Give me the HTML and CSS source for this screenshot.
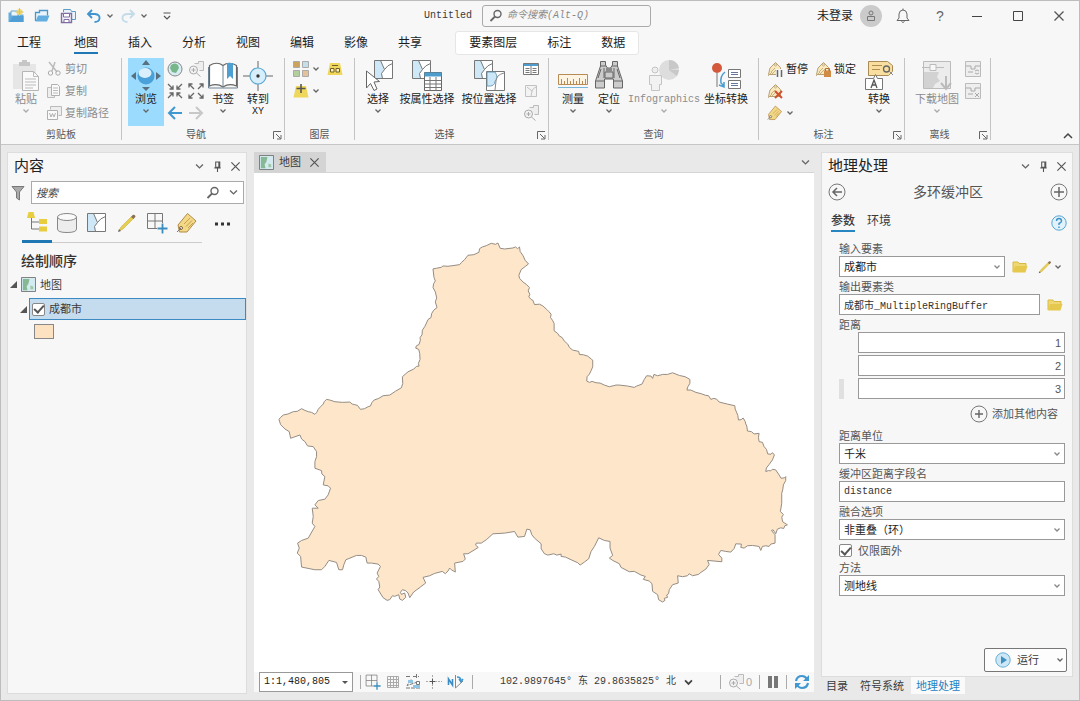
FILE: index.html
```html
<!DOCTYPE html>
<html lang="zh-CN">
<head>
<meta charset="utf-8">
<title>Untitled</title>
<link rel="stylesheet" href="styles.css">
</head>
<body>
<svg class="defs" aria-hidden="true">
  <symbol id="chev" viewBox="0 0 8 8"><path d="M1.500 2.500 4 5l2.500-2.500" fill="none" stroke="currentColor"/></symbol>
  <symbol id="launch" viewBox="0 0 9 9"><path d="M.5 8V.5H8M3 3l4.500 4.500M8 4v4H4" fill="none" stroke="#666"/></symbol>
  <symbol id="close" viewBox="0 0 12 12"><path d="M1.500 1.500l9 9m0-9l-9 9" fill="none" stroke="#555" stroke-width="1.300"/></symbol>
  <symbol id="pin" viewBox="0 0 10 12"><path d="M3 1h4.500v6H3zM1.500 7.500h7M5 7.500V12M6.500 1v6" fill="none" stroke="#555" stroke-width="1.200"/></symbol>
  <symbol id="mag" viewBox="0 0 14 14"><circle cx="8.500" cy="5" r="3.500" fill="none" stroke="#666" stroke-width="1.400"/><path d="M6 7.500 1.500 12" stroke="#666" stroke-width="1.800"/></symbol>
  <symbol id="folder" viewBox="0 0 16 14"><path d="M1 12V2h5l1 1.500h7V6" fill="#efd873" stroke="#d8ba42"/><path d="M1 12.500 3 6h12.500l-2 6.500z" fill="#e6c84c"/></symbol>
  <symbol id="pencil" viewBox="0 0 20 20"><path d="M2 18l2-4L14.500 3.500l2 2L6 16z" fill="#e6cf50" stroke="#c9ac3c" stroke-width=".6"/><path d="M14 4l2-2.200q2.500-.3 2.500 2L16.500 6z" fill="#8b6f55"/><path d="M1 19l1-3 2 2z" fill="#666"/></symbol>
  <symbol id="poly" viewBox="0 0 20 20"><path d="M.5.500h18v18H.5z" fill="#fff"/><path d="M.5.500h6l4 9-3 4 1 5h-8z" fill="#cfe8f7"/><path d="M.5.500h18v18H.5zM6.500.5l4 9-3 4 1 5M10.500 9.500q3-4.500 8-6" fill="none" stroke="#777"/></symbol>
  <symbol id="house" viewBox="0 0 16 16"><path d="M1.500 13.500 3 7 8.500 1.500l5 5v7z" fill="#fae9bd" stroke="#b9a172"/><path d="M4 11l4-4m-3 6 5-5M1 15l4-4" stroke="#b9a172" stroke-width=".8"/><circle cx="8.500" cy="4" r="1" fill="#fff" stroke="#8d7440" stroke-width=".5"/></symbol>
  <symbol id="tag" viewBox="0 0 22 22"><path d="M2 13 11.500 1.500 20 9 11 20H3.500z" fill="#f3d888" stroke="#b18b45"/><path d="M8 12l6-6M10 14.500l6-6M12 16l5-5" stroke="#c79f4d"/><circle cx="5" cy="16" r="1.500" fill="#fff" stroke="#7d633a"/><path d="M5 16l-4 4" stroke="#777"/></symbol>
  <symbol id="gridplus" viewBox="0 0 22 22"><path d="M1.500 1.500h15v15h-15zM9 1.500v15M1.500 9h15" fill="none" stroke="#777"/><path d="M11 11h11v11H11z" fill="#f7f7f7"/><path d="M16.500 11.500v10M11.500 16.500h10" stroke="#3c8dbf" stroke-width="1.800"/></symbol>
  <symbol id="mapicon" viewBox="0 0 16 16"><path d="M.5.500h15v15H.5z" fill="#d2eaf0" stroke="#777"/><path d="M2 2h7l-1 5-2 3 1 4H2z" fill="#86b894"/><path d="M10 9l3 1v3h-3z" fill="#9cc8a4"/></symbol>
  <symbol id="zoomsel" viewBox="0 0 16 16"><path d="M6.500 2.500h4v-2h5v9h-4" fill="#eee" stroke="#bbb"/><circle cx="5.500" cy="9" r="4" fill="#f3f3f3" stroke="#aaa"/><path d="M3.500 9h4m-2-2v4M8.500 12l4 3.500" stroke="#aaa"/></symbol>
</svg>

<div class="window">
<header class="titlebar">
  <div class="quick">
    <button class="ib" aria-label="新建"><svg width="16" height="16" viewBox="0 0 16 16"><path d="M.5 14V4.500h5l1 2h9V14z" fill="#62aee0"/><path d="M3 3h7v5H3z" fill="#e9f4fb" stroke="#6ba7cf"/><path d="M1 14 5 8h10.500v6z" fill="#4f9fd6"/><circle cx="11.500" cy="4" r="3" fill="#efd970"/><path d="M11.500 0v8m-4-4h8" stroke="#d8c56a"/></svg></button>
    <button class="ib" aria-label="打开"><svg width="16" height="16" viewBox="0 0 16 16"><path d="M1.500 13V4.500h4v-2h8v5" fill="#eaf5fb" stroke="#4c97c8" stroke-width="1.300"/><path d="M1.500 13.500 4 7.500h11.500l-2.500 6z" fill="#62aee0"/></svg></button>
    <button class="ib" aria-label="保存"><svg width="16" height="16" viewBox="0 0 16 16"><path d="M3.500 4V1.500h7l1 2h4v8H12" fill="#e9f3f9" stroke="#5b9cc6"/><path d="M1.500 5.500h10v9h-10z" fill="#f3f0f8" stroke="#7e6ea3" stroke-width="1.400"/><path d="M3.500 5.500h6v3.500h-6zM4 11.500h5v3H4z" fill="#fff" stroke="#7e6ea3"/></svg></button>
    <button class="ib" aria-label="撤消"><svg width="16" height="16" viewBox="0 0 16 16"><path d="M6 2 2 6l4 4M2.500 6H9q5 .5 4.500 4.500-.5 3.500-5 3.500" fill="none" stroke="#4194cf" stroke-width="1.900"/></svg></button>
    <svg class="chev"><use href="#chev"/></svg>
    <button class="ib" aria-label="恢复"><svg width="16" height="16" viewBox="0 0 16 16"><path d="M10 2l4 4-4 4m3.500-4H7q-5 .5-4.500 4.500Q3 14 7.500 14" fill="none" stroke="#c4dbea" stroke-width="1.900"/></svg></button>
    <svg class="chev"><use href="#chev"/></svg>
    <button class="ib ib-custom" aria-label="自定义"><svg width="10" height="10" viewBox="0 0 10 10"><path d="M1.500 2h7M2 5l3 3 3-3" fill="none" stroke="#555" stroke-width="1.200"/></svg></button>
  </div>
  <div class="title-mid"><span class="mono">Untitled</span>
    <label class="cmd"><svg width="14" height="14"><use href="#mag"/></svg><input aria-label="命令搜索" placeholder="命令搜索(Alt-Q)"></label>
  </div>
  <div class="account">
    <span class="signin">未登录</span>
    <span class="avatar"><svg width="12" height="12" viewBox="0 0 12 12"><circle cx="6" cy="3" r="2" fill="none" stroke="#777"/><path d="M2.500 10.500v-4h7v4z" fill="none" stroke="#777"/></svg></span>
    <button class="win bell" aria-label="通知"><svg width="14" height="16" viewBox="0 0 14 16"><path d="M1 12.500h12l-2-2.500V6q-.5-4-4-4T3 6v4zM7 2V.5M5.500 13.500q1.500 2 3 0" fill="none" stroke="#666"/></svg></button>
    <button class="win help">?</button>
    <button class="win" aria-label="最小化"><svg width="12" height="12"><path d="M1 6.500h10" stroke="#444"/></svg></button>
    <button class="win" aria-label="最大化"><svg width="12" height="12"><path d="M1.500 1.500h9v9h-9z" fill="none" stroke="#444"/></svg></button>
    <button class="win" aria-label="关闭"><svg width="12" height="12"><use href="#close"/></svg></button>
  </div>
</header>

<nav class="tabs">
  <button>工程</button><button class="on">地图</button><button>插入</button><button>分析</button><button>视图</button><button>编辑</button><button>影像</button><button>共享</button>
  <div class="context"><button>要素图层</button><button>标注</button><button>数据</button></div>
</nav>

<section class="ribbon">
  <div class="group g-clip">
    <div class="tools">
      <button class="big off w40"><svg width="32" height="32" viewBox="0 0 32 32"><path d="M3 4h23v25H3z" fill="#e6e6e6"/><path d="M9 2h3V0h5v2h3v4H9z" fill="#c6c6c6"/><path d="M12.500 11.500h11l5 5v14h-16z" fill="#fafafa" stroke="#b5b5b5"/><path d="M23.500 11.500v5h5M15 19h11M15 22h11M15 25h11M15 28h8" fill="none" stroke="#bbb"/></svg><span>粘贴</span><svg class="chev"><use href="#chev"/></svg></button>
      <div class="rows">
        <button class="small off"><svg width="16" height="16" viewBox="0 0 16 16"><path d="M3 1l8 10M9 1 6 10" stroke="#bbb" stroke-width="1.500"/><circle cx="4.500" cy="12" r="2.200" fill="none" stroke="#aaa"/><circle cx="12" cy="12" r="2.200" fill="none" stroke="#aaa"/></svg>剪切</button>
        <button class="small off"><svg width="16" height="16" viewBox="0 0 16 16"><path d="M1.500 4.500h7v10h-7z" fill="#eee" stroke="#bbb"/><path d="M5.500 1.500h6l2 2v9h-8z" fill="#fafafa" stroke="#b0b0b0"/><path d="M7 5h5M7 7.500h5M7 10h5" stroke="#bbb"/></svg>复制</button>
        <button class="small off"><svg width="16" height="16" viewBox="0 0 16 16"><path d="M4.500 4.500v-3h11v9h-3" fill="#eee" stroke="#bbb"/><path d="M1.500 5.500h10v9h-10z" fill="#fafafa" stroke="#b0b0b0"/><path d="M3.500 8l1.500 4 1.500-3.500L8 12l1.500-4" fill="none" stroke="#b0b0b0"/></svg>复制路径</button>
      </div>
    </div>
    <div class="cap">剪贴板</div>
  </div>

  <div class="group g-nav">
    <div class="tools">
      <button class="big active w36"><svg width="32" height="32" viewBox="0 0 32 32"><path d="M16 0l4 5h-8zM16 31l-4-4h8zM1 16l5-4v8zM31 16l-5-4v8z" fill="#58707f"/><circle cx="16" cy="16" r="8.500" fill="#4aa0d8"/><ellipse cx="15" cy="13" rx="6.500" ry="5" fill="#d9effb"/></svg><span>浏览</span><svg class="chev"><use href="#chev"/></svg></button>
      <div class="pairs">
        <button class="ib" aria-label="全图"><svg width="16" height="16" viewBox="0 0 16 16"><circle cx="8" cy="8" r="7" fill="#d8edf3" stroke="#888"/><path d="M4 4q4-3 7 0l1 3-3 5-4-1-2-4z" fill="#77b68a"/></svg></button>
        <button class="ib" aria-label="缩放至所选"><svg width="16" height="16"><use href="#zoomsel"/></svg></button>
        <button class="ib" aria-label="固定放大"><svg width="16" height="16" viewBox="0 0 16 16"><path d="M1 1l5 5M6 2.500V6H2.500M15 1l-5 5m0-3.500V6h3.500M1 15l5-5m0 3.500V10H2.500M15 15l-5-5m0 3.500V10h3.500" fill="none" stroke="#666" stroke-width="1.300"/></svg></button>
        <button class="ib" aria-label="固定缩小"><svg width="16" height="16" viewBox="0 0 16 16"><path d="M1 1l5 5M1 4.500V1h3.500M15 1l-5 5m5-1.500V1h-3.500M1 15l5-5m-5 1.500V15h3.500M15 15l-5-5m5 1.500V15h-3.500" fill="none" stroke="#666" stroke-width="1.300"/></svg></button>
        <button class="ib" aria-label="上一视图"><svg width="16" height="16" viewBox="0 0 16 16"><path d="M15 8H2m6-6L2 8l6 6" fill="none" stroke="#4098d0" stroke-width="2"/></svg></button>
        <button class="ib" aria-label="下一视图"><svg width="16" height="16" viewBox="0 0 16 16"><path d="M1 8h13M8 2l6 6-6 6" fill="none" stroke="#c8c8c8" stroke-width="2"/></svg></button>
      </div>
      <button class="big w34"><svg width="32" height="32" viewBox="0 0 32 32"><path d="M2.500 5.500Q10 1 16 5.500q6-4.500 13.500 0V26q-7.500-3-13.500 1-6-4-13.500-1z" fill="#fff" stroke="#666" stroke-width="1.200"/><path d="M16 5.500V27M1.500 7v21h29V7" fill="none" stroke="#6d8291"/><path d="M20 3h6v16l-3-3-3 3z" fill="#4e9fd2"/></svg><span>书签</span><svg class="chev"><use href="#chev"/></svg></button>
      <button class="big w36"><svg width="32" height="32" viewBox="0 0 32 32"><path d="M16 1v7m0 16v7M1 16h7m16 0h7" stroke="#666"/><circle cx="16" cy="16" r="8" fill="#d7effb" stroke="#5ca7d2" stroke-width="1.200"/><circle cx="16" cy="16" r="1.700" fill="#333"/></svg><span>转到</span><span class="xy">XY</span></button>
    </div>
    <div class="cap">导航</div><button class="launch" aria-label="导航选项"><svg width="9" height="9"><use href="#launch"/></svg></button>
  </div>

  <div class="group g-layer">
    <div class="tools layergrid">
      <button class="ib two" aria-label="底图"><svg width="16" height="16" viewBox="0 0 16 16"><path d="M.5.500h6v6h-6z" fill="#cba35c"/><path d="M9 .5h6.500v6H9z" fill="#c5dfe8"/><path d="M.5 9h6v6.500h-6z" fill="#b3cf9d"/><path d="M9 9h6.500v6.500H9z" fill="#e3c19b"/><path d="M.5.500h6v6h-6zM9.500.500h6v6h-6zM.5 9.500h6v6h-6zM9.500 9.500h6v6h-6z" fill="none" stroke="#aaa"/></svg><svg class="chev"><use href="#chev"/></svg></button>
      <button class="ib" aria-label="添加图形图层"><svg width="16" height="16" viewBox="0 0 16 16"><path d="M3 2h10l2.500 12H.5z" fill="#eed75a"/><path d="M3.500 7.500h3.500v3.500H3.500zM9 7.500h3.500v3.500H9zM5 4.500h6" fill="#fff5bb" stroke="#705f2a"/></svg></button>
      <button class="ib two" aria-label="添加数据"><svg width="16" height="16" viewBox="0 0 16 16"><path d="M3 3h10l2.500 11.500H.5z" fill="#eed75a"/><path d="M8 1v9M3.500 5.500h9" stroke="#555" stroke-width="1.600"/></svg><svg class="chev"><use href="#chev"/></svg></button>
    </div>
    <div class="cap">图层</div>
  </div>

  <div class="group g-select">
    <div class="tools">
      <button class="big w36"><svg width="32" height="32" viewBox="0 0 32 32"><svg x="12" y="0" width="20" height="20"><use href="#poly"/></svg><path d="M4.500 11v17l4-4.500 3.500 7 3-1.500-3-7 5.500-.5z" fill="#fff" stroke="#666"/></svg><span>选择</span><svg class="chev"><use href="#chev"/></svg></button>
      <button class="big w62"><svg width="32" height="32" viewBox="0 0 32 32"><svg x="1" y="0" width="20" height="20"><use href="#poly"/></svg><path d="M13.500 12.500h17v18h-17z" fill="#fff" stroke="#666"/><path d="M13.500 12.500h17v4h-17z" fill="#4d9dcc"/><path d="M13.500 20.500h17m-17 3.500h17m-17 3.500h17M19 17v13.500M25 17v13.500" stroke="#777"/></svg><span>按属性选择</span></button>
      <button class="big w62"><svg width="32" height="32" viewBox="0 0 32 32"><svg x="1" y="0" width="20" height="20"><use href="#poly"/></svg><path d="M13.500 11.500h18v19h-18z" fill="#fff" stroke="#777"/><path d="M14 12h8q4 6 0 9 0 6-8 5z" fill="#cce7f7" stroke="#5c8ca8" stroke-width=".8"/><path d="M31 13q-8 2-8 8l-1 9" fill="none" stroke="#888"/></svg><span>按位置选择</span></button>
      <div class="rows icons">
        <button class="ib" aria-label="属性表"><svg width="16" height="16" viewBox="0 0 16 16"><path d="M.5 2.500h15v11H.5z" fill="#fff" stroke="#777"/><path d="M1 3h14v2H1z" fill="#4e9dce"/><path d="M8 5v8M2.500 7.500h4m-4 2h4m-4 2h4m3-4h4m-4 2h4m-4 2h4" stroke="#777"/></svg></button>
        <button class="ib" aria-label="清除"><svg width="12" height="12" viewBox="0 0 12 12"><path d="M.5.500h11v11H.5zM2 2l5 4-1 5.500M7 6q1-3 4-4" fill="#f3f3f3" stroke="#c2c2c2"/></svg></button>
        <button class="ib" aria-label="缩放至所选要素"><svg width="16" height="16"><use href="#zoomsel"/></svg></button>
      </div>
    </div>
    <div class="cap">选择</div><button class="launch" aria-label="选择选项"><svg width="9" height="9"><use href="#launch"/></svg></button>
  </div>

  <div class="group g-query">
    <div class="tools">
      <button class="big w36"><svg width="32" height="32" viewBox="0 0 32 32"><path d="M1.500 14.500h29v10h-29z" fill="#fdf4e4" stroke="#b88a54"/><path d="M4.500 24v-5m3 5v-3m3 3v-6m3 6v-3m3 3v-5m3 5v-3m3 3v-6m3 6v-3m3 3v-5" stroke="#b88a54"/><path d="M1 27.500h30" stroke="#78b6da"/></svg><span>测量</span><svg class="chev"><use href="#chev"/></svg></button>
      <button class="big w36"><svg width="32" height="32" viewBox="0 0 32 32"><path d="M7.500 1.500h5V5l2 3h3l2-3V1.500h5V6l5 15v7h-9v-9h-9v9h-9v-7L7.500 6z" fill="#ccc" stroke="#666"/><path d="M7 6h6m6 0h6M3 21h9m8 0h9M12 12h8v6h-8zM8 9l-3 9m19-9 3 9M11 8v10m10-10v10" fill="none" stroke="#666"/><path d="M13 8h6v4h-6z" fill="#8a8a8a"/></svg><span>定位</span><svg class="chev"><use href="#chev"/></svg></button>
      <button class="big off w74"><svg width="32" height="32" viewBox="0 0 32 32"><circle cx="21" cy="10" r="10" fill="#ddd"/><path d="M21 10V0q8 0 10 8zM21 10l8 6 2-6z" fill="#c8c8c8"/><circle cx="7" cy="10" r="3" fill="#eee" stroke="#c4c4c4"/><path d="M1.500 15.500h12v9h-2v6h-8v-6h-2z" fill="#f2f2f2" stroke="#c4c4c4"/></svg><span class="mono">Infographics</span><svg class="chev"><use href="#chev"/></svg></button>
      <button class="big w50"><svg width="32" height="32" viewBox="0 0 32 32"><circle cx="7" cy="8" r="5" fill="#d4593c"/><path d="M7 13v14" stroke="#777"/><path d="M15 12q-5 4-4 11l3 3m-5-1 5 2v-5" fill="none" stroke="#4a9bcf" stroke-width="1.500"/><path d="M18.500 9.500h12v8h-12zM18.500 20.500h12v8h-12z" fill="#fff" stroke="#777"/><path d="M21 12.500h7m-7 2h7m-7 9h7m-7 2h7" stroke="#667799"/></svg><span>坐标转换</span></button>
    </div>
    <div class="cap">查询</div>
  </div>

  <div class="group g-label">
    <div class="tools">
      <div class="labelgrid">
        <button class="small"><svg width="16" height="16"><use href="#house"/><path d="M9 8h7v8H9z" fill="#f7f7f7"/><path d="M10.500 9v7m4-7v7" stroke="#666" stroke-width="1.500"/></svg>暂停</button>
        <button class="small"><svg width="16" height="16"><use href="#house"/><path d="M9 9.500h7V16H9z" fill="#d28b45"/><path d="M10.500 10V7.500h4V10" fill="none" stroke="#b66c35"/></svg>锁定</button>
        <button class="small" aria-label="查看未放置的"><svg width="16" height="16"><use href="#house"/><path d="M8 8l7 7m0-7-7 7" stroke="#d0512f" stroke-width="2"/></svg></button><span></span>
        <button class="small" aria-label="更多标注"><svg width="16" height="16"><use href="#tag"/></svg><svg class="chev"><use href="#chev"/></svg></button>
      </div>
      <button class="big w36"><svg width="32" height="32" viewBox="0 0 32 32"><path d="M5.500 1.500h19l5 4v6l-4 4h-20z" fill="#f8df9f" stroke="#a88b55"/><path d="M9 5.500h10M9 9.500h8" stroke="#b18d50"/><circle cx="23.500" cy="9" r="3" fill="none" stroke="#666" stroke-width="1.300"/><path d="M26 11l4 4" stroke="#888"/><path d="M4.500 18.500h6l2-4 2 4h5v11h-17v-11z" fill="#fff" stroke="#777"/><path d="M8 28l3-8 3 8m-5-3h4" fill="none" stroke="#555" stroke-width="1.300"/></svg><span>转换</span><svg class="chev"><use href="#chev"/></svg></button>
    </div>
    <div class="cap">标注</div><button class="launch" aria-label="标注选项"><svg width="9" height="9"><use href="#launch"/></svg></button>
  </div>

  <div class="group g-offline">
    <div class="tools">
      <button class="big off w50"><svg width="32" height="32" viewBox="0 0 32 32"><path d="M2.500 1.500h27v27h-27z" fill="#ececec" stroke="#bbb"/><path d="M3 12h15l-2 5 3 4-5 3-2 4H3z" fill="#d2d2d2"/><path d="M1 7.500h8m6 0h8M9 4.500h6v6H9z" fill="#f8f8f8" stroke="#bbb"/><path d="M25 16v12m-5-5 5 6 5-6" fill="none" stroke="#bbb" stroke-width="2"/></svg><span>下载地图</span><svg class="chev"><use href="#chev"/></svg></button>
      <div class="rows icons off">
        <button class="ib" aria-label="同步"><svg width="16" height="16" viewBox="0 0 16 16"><path d="M.5.500h15v15H.5z" fill="#eee" stroke="#bbb"/><path d="M1 5h5v3h4V5h5M3 11h5m2-1q2-2 4 0m0 2q-2 2-4 0" fill="none" stroke="#aaa"/></svg></button>
        <button class="ib" aria-label="移除"><svg width="16" height="16" viewBox="0 0 16 16"><path d="M.5.500h15v15H.5z" fill="#eee" stroke="#bbb"/><path d="M1 5h5v3h4V5h5M3 11h5m2-1 4 4m0-4-4 4" fill="none" stroke="#aaa"/></svg></button>
      </div>
    </div>
    <div class="cap">离线</div><button class="launch" aria-label="离线选项"><svg width="9" height="9"><use href="#launch"/></svg></button>
  </div>
  <button class="fold" aria-label="折叠功能区"><svg width="12" height="8"><path d="M2 6l4-4 4 4" fill="none" stroke="#444" stroke-width="1.500"/></svg></button>
</section>

<main class="work">
  <aside class="panel contents">
    <header class="ptitle"><h2>内容</h2><svg class="chev10"><use href="#chev"/></svg><svg width="9" height="11"><use href="#pin"/></svg><button class="ib" aria-label="关闭内容"><svg width="11" height="11"><use href="#close"/></svg></button></header>
    <div class="searchrow">
      <svg width="14" height="16" viewBox="0 0 14 16"><path d="M1 1.500h12L8.500 7v8l-3-2V7z" fill="#aaa" stroke="#777"/></svg>
      <label class="search"><input aria-label="搜索" placeholder="搜索"><svg width="14" height="14"><use href="#mag"/></svg><svg class="chev10"><use href="#chev"/></svg></label>
    </div>
    <div class="modes">
      <button class="on" aria-label="按绘制顺序列出"><svg width="22" height="22" viewBox="0 0 22 22"><path d="M5.500 6v12H14M5.500 11H14" fill="none" stroke="#777"/><path d="M2.500 1h5l1.500 6H1zM13 8h8v5h-8zM13 15.500h8v5h-8z" fill="#e8cd3f"/></svg></button>
      <button aria-label="按数据源列出"><svg width="22" height="22" viewBox="0 0 22 22"><path d="M1.500 5v12q0 3.500 9.500 3.500t9.500-3.500V5" fill="#ededed" stroke="#888"/><ellipse cx="11" cy="5" rx="9.500" ry="3.500" fill="#fafafa" stroke="#888"/></svg></button>
      <button aria-label="按选择列出"><svg width="20" height="20"><use href="#poly"/></svg></button>
      <button aria-label="按编辑列出"><svg width="20" height="20"><use href="#pencil"/></svg></button>
      <button aria-label="按捕捉列出"><svg width="22" height="22"><use href="#gridplus"/></svg></button>
      <button aria-label="按标注列出"><svg width="22" height="22"><use href="#tag"/></svg></button>
      <button class="more" aria-label="更多"><svg width="16" height="4"><path d="M0 .5h3v3H0zM6 .5h3v3H6zM12 .5h3v3h-3z" fill="#333"/></svg></button>
    </div>
    <h3>绘制顺序</h3>
    <div class="node"><svg width="7" height="7"><path d="M7 0v7H0z" fill="#555"/></svg><svg width="15" height="15"><use href="#mapicon"/></svg>地图</div>
    <div class="node child"><svg width="7" height="7"><path d="M7 0v7H0z" fill="#555"/></svg><label class="sel"><input type="checkbox" checked>成都市</label></div>
    <div class="swatch"></div>
  </aside>

  <section class="mapview">
    <div class="doctabs"><div class="doctab"><svg width="15" height="15"><use href="#mapicon"/></svg>地图<button class="ib" aria-label="关闭地图"><svg width="11" height="11"><use href="#close"/></svg></button></div><svg class="chev10"><use href="#chev"/></svg></div>
    <div class="canvas">
      <svg viewBox="-18 -171 1683 1497" role="img" aria-label="成都市">
        <path fill="#fde6c9" stroke="#958d84" stroke-width="3" stroke-linejoin="round" d="M57 568 62 562 70 555 84 552 100 545 112 544 125 536 135 541 145 545 155 547 165 553 170 548 175 538 182 530 190 522 193 515 200 508 210 510 225 515 248 517 270 516 277 522 285 524 293 526 302 538 314 536 325 530 332 528 336 518 343 510 357 505 370 497 390 495 408 483 425 473 429 460 428 440 445 425 462 417 470 409 478 408 476 400 481 388 480 370 477 358 468 354 470 347 478 343 482 330 481 322 487 314 488 300 496 288 505 268 514 262 516 250 522 240 532 232 527 215 531 203 527 185 520 172 522 160 527 152 523 142 520 116 530 114 545 111 550 107 565 108 580 106 600 103 606 96 615 88 625 75 643 73 658 66 660 55 668 50 680 46 695 39 708 42 715 38 722 54 735 56 760 53 768 50 774 55 780 50 782 64 790 75 797 90 807 101 798 108 785 118 778 135 780 144 790 155 800 162 810 172 806 182 811 192 808 200 815 208 820 210 825 223 840 222 850 227 862 238 868 244 875 252 873 262 879 270 884 280 884 302 895 310 900 318 908 322 914 332 925 342 930 352 940 360 950 362 958 364 960 373 972 374 985 378 997 388 1000 390 1000 410 995 422 990 432 983 440 982 453 990 457 998 454 1010 458 1022 459 1035 465 1050 470 1070 465 1080 465 1105 468 1125 472 1132 468 1148 462 1155 448 1162 437 1175 438 1180 445 1184 433 1195 437 1210 433 1225 433 1240 428 1250 432 1260 436 1278 440 1292 448 1292 460 1286 470 1283 480 1295 480 1310 487 1326 491 1340 496 1348 497 1355 508 1364 505 1372 507 1380 516 1404 522 1427 527 1428 537 1432 546 1436 556 1438 570 1446 569 1452 564 1458 574 1460 582 1463 588 1465 603 1477 605 1485 612 1500 610 1498 622 1500 635 1510 637 1515 650 1522 658 1526 672 1536 673 1540 668 1546 675 1540 690 1530 704 1522 714 1520 725 1528 722 1535 723 1540 718 1550 720 1560 735 1566 745 1576 744 1580 740 1580 752 1573 765 1571 780 1568 790 1568 820 1564 845 1573 854 1568 862 1571 876 1585 885 1577 888 1574 896 1565 894 1555 898 1550 912 1542 900 1537 902 1548 915 1548 940 1535 943 1530 950 1520 948 1510 950 1505 962 1500 950 1480 947 1465 948 1455 955 1445 953 1447 943 1430 942 1425 956 1415 967 1400 965 1385 962 1378 974 1388 985 1388 996 1345 992 1350 1004 1340 1018 1325 1028 1318 1034 1300 1038 1290 1032 1285 1038 1270 1041 1255 1038 1257 1060 1240 1065 1230 1080 1228 1092 1222 1096 1225 1103 1215 1106 1217 1112 1210 1117 1198 1110 1195 1095 1180 1085 1178 1062 1170 1054 1152 1049 1158 1040 1145 1036 1125 1025 1110 1026 1085 1013 1080 1002 1060 992 1050 985 1060 977 1052 955 1052 935 1035 932 1018 924 1005 950 995 965 988 987 975 997 962 1006 955 999 935 990 918 982 905 980 905 973 892 976 883 972 865 976 855 972 845 957 845 942 825 925 817 915 812 900 802 898 795 920 775 922 765 905 735 910 700 912 680 930 665 940 650 940 648 946 656 953 640 963 625 972 612 972 617 988 610 995 585 1000 587 1027 575 1020 570 1015 565 1024 557 1032 548 1025 525 1031 510 1038 490 1043 498 1060 482 1072 462 1087 450 1104 445 1090 438 1083 428 1080 422 1088 425 1094 435 1090 438 1103 428 1112 420 1108 417 1095 405 1100 398 1098 390 1110 382 1112 370 1104 355 1080 360 1072 357 1055 350 1048 357 1040 352 1030 362 1010 355 1003 335 1000 322 1000 318 982 305 977 290 977 258 990 252 1005 248 1020 237 1020 230 998 207 992 195 1010 185 1020 165 1020 125 1012 122 980 112 970 118 955 113 940 125 932 145 925 165 890 157 880 160 860 157 835 175 835 165 825 175 812 195 808 205 795 212 775 205 768 190 765 195 740 186 732 185 722 165 715 165 695 170 680 170 665 160 650 143 648 135 635 125 627 120 615 92 625 88 605 75 597 62 584Z"/>
      </svg>
    </div>
    <footer class="status">
      <label class="combo scale"><select aria-label="比例尺"><option>1:1,480,805</option></select><svg width="8" height="8"><path d="M1 3h6L4 6z" fill="#555"/></svg></label>
      <i class="bar"></i>
      <div class="sicons">
        <button class="ib" aria-label="捕捉"><svg width="16" height="16"><use href="#gridplus"/></svg></button>
        <button class="ib" aria-label="格网"><svg width="14" height="14"><path d="M1.500 1.500h11v11h-11zM4.500 1v12m3-12v12m3-12v12M1 4.500h12M1 7.500h12M1 10.500h12" fill="none" stroke="#aaa"/></svg></button>
        <button class="ib" aria-label="动态约束"><svg width="16" height="16"><path d="M1 2.500h4m3 0h6M11.500 0v5M6 5.500l-4 6 9-3M1 14h14" fill="none" stroke="#777" stroke-dasharray="4 1"/><path d="M3 6h5v3H3zM8 11h7v3H8z" fill="#8fc4e4"/><path d="M11.500 7.500h3v3h-3z" fill="#fff" stroke="#777"/></svg></button>
        <button class="ib" aria-label="推断"><svg width="16" height="16"><path d="M6.500 1v14M0 7.500h16" stroke="#aaa" stroke-dasharray="2 1"/><path d="M6.500 5v5M4 7.500h5" stroke="#555"/></svg></button>
        <button class="ib" aria-label="指北"><svg width="18" height="16"><path d="M1.500 11V5l4 6V5" fill="none" stroke="#3c8dc6" stroke-width="1.600"/><path d="M8.500 1v13L16 7" fill="none" stroke="#888"/><path d="M10 3q4 0 4 4m-2-2 2 3 2-3" fill="none" stroke="#4298ce" stroke-width="1.500"/></svg></button>
      </div>
      <i class="bar"></i>
      <span class="coords">102.9897645° 东 29.8635825° 北</span><svg class="chev10 dark"><use href="#chev"/></svg>
      <i class="bar push"></i>
      <span class="count"><svg width="16" height="16"><use href="#zoomsel"/></svg>0</span>
      <i class="bar"></i>
      <button class="ib" aria-label="暂停绘制"><svg width="12" height="14"><path d="M1 1h4v12H1zM7 1h4v12H7z" fill="#777"/></svg></button>
      <i class="bar"></i>
      <button class="ib" aria-label="刷新"><svg width="16" height="16"><path d="M2 7q1-5 6-5 3 0 5 3M14 9q-1 5-6 5-3 0-5-3" fill="none" stroke="#4197cf" stroke-width="2.200"/><path d="M15 1v6H9zM1 15V9h6z" fill="#4197cf"/></svg></button>
    </footer>
  </section>

  <div class="right">
    <aside class="panel gp">
      <header class="ptitle"><h2>地理处理</h2><svg class="chev10"><use href="#chev"/></svg><svg width="9" height="11"><use href="#pin"/></svg><button class="ib" aria-label="关闭地理处理"><svg width="11" height="11"><use href="#close"/></svg></button></header>
      <div class="toolname"><button class="ib" aria-label="返回"><svg width="18" height="18"><circle cx="9" cy="9" r="8" fill="none" stroke="#777"/><path d="M14 9H5m4-4L5 9l4 4" fill="none" stroke="#666" stroke-width="1.500"/></svg></button><h2>多环缓冲区</h2><button class="ib" aria-label="添加"><svg width="18" height="18"><circle cx="9" cy="9" r="8" fill="none" stroke="#777"/><path d="M9 4v10M4 9h10" stroke="#666" stroke-width="1.500"/></svg></button></div>
      <div class="gptabs"><button class="on">参数</button><button>环境</button><a href="#" class="qhelp" aria-label="帮助"><svg width="16" height="16"><circle cx="8" cy="8" r="7.200" fill="#e1f2fb" stroke="#58a6d2"/><path d="M5.500 6q0-2.500 2.500-2.500T10.500 6q0 1.500-2.500 2.500v1.500M8 11.500v1.500" fill="none" stroke="#3d93c8" stroke-width="1.400"/></svg></a></div>
      <form class="form">
        <div class="field"><label for="in">输入要素</label><div class="line"><span class="combo grow"><select id="in"><option>成都市</option></select><svg class="chev"><use href="#chev"/></svg></span><button type="button" class="ib" aria-label="浏览输入"><svg width="16" height="14"><use href="#folder"/></svg></button><button type="button" class="ib pen" aria-label="绘制"><svg width="14" height="14"><use href="#pencil"/></svg><svg class="chev"><use href="#chev"/></svg></button></div></div>
        <div class="field"><label for="out">输出要素类</label><div class="line"><input id="out" class="grow latin" value="成都市_MultipleRingBuffer"><button type="button" class="ib" aria-label="浏览输出"><svg width="16" height="14"><use href="#folder"/></svg></button></div></div>
        <fieldset class="field dist"><legend>距离</legend><input aria-label="距离 1" value="1"><input aria-label="距离 2" value="2"><div class="line last"><i class="grip"></i><input aria-label="距离 3" value="3"></div></fieldset>
        <button type="button" class="addmore"><svg width="18" height="18"><circle cx="9" cy="9" r="8" fill="none" stroke="#777"/><path d="M9 5v8M5 9h8" stroke="#666" stroke-width="1.400"/></svg>添加其他内容</button>
        <div class="field"><label for="unit">距离单位</label><span class="combo"><select id="unit"><option>千米</option></select><svg class="chev"><use href="#chev"/></svg></span></div>
        <div class="field"><label for="fname">缓冲区距离字段名</label><input id="fname" class="latin" value="distance"></div>
        <div class="field"><label for="diss">融合选项</label><span class="combo"><select id="diss"><option>非重叠（环）</option></select><svg class="chev"><use href="#chev"/></svg></span></div>
        <label class="check"><input type="checkbox" checked>仅限面外</label>
        <div class="field"><label for="meth">方法</label><span class="combo"><select id="meth"><option>测地线</option></select><svg class="chev"><use href="#chev"/></svg></span></div>
      </form>
      <button class="run"><svg width="16" height="16"><circle cx="8" cy="8" r="7.200" fill="#cce8f7" stroke="#69afd6"/><path d="M6 4l6 4-6 4z" fill="#3f8fbf"/></svg><span>运行</span><svg class="chev"><use href="#chev"/></svg></button>
    </aside>
    <nav class="docktabs"><button>目录</button><button>符号系统</button><button class="on">地理处理</button></nav>
  </div>
</main>
</div>
</body>
</html>
```
FILE: styles.css
```css
* { box-sizing: border-box; margin: 0; padding: 0; }
body { font: 11px/14px "Liberation Sans", "Noto Sans CJK SC", sans-serif; color: #3a3a3a; background: #f7f7f7; }
button, input, select { font: inherit; color: inherit; border: 0; background: none; border-radius: 0; }
svg { display: block; flex: none; }
.defs { position: absolute; width: 0; height: 0; }
.chev { width: 8px; height: 8px; color: #666; stroke-width: 1.3; }
.chev10 { width: 11px; height: 11px; color: #666; stroke-width: 1; }
.chev10.dark { color: #444; stroke-width: 1.3; }
.mono { font-family: "Liberation Mono", "Noto Sans CJK SC", monospace; font-size: 10px; }
.ib { display: flex; align-items: center; justify-content: center; }
.window { height: 100vh; display: flex; flex-direction: column; border: 1px solid #bdbdbd; }

.titlebar { display: grid; grid-template-columns: minmax(0, 423fr) auto minmax(0, 428fr); align-items: center; height: 30px; }
.quick { display: flex; align-items: center; gap: 10px; padding-left: 7px; }
.quick .chev { margin: 0 -4px 0 -6px; }
.quick .ib-custom { margin-left: 8px; }
.title-mid { display: flex; align-items: center; gap: 10px; }
.cmd { display: flex; align-items: center; gap: 4px; width: 169px; height: 22px; padding: 0 6px; border: 1px solid #aaa; border-radius: 3px; }
.cmd input { flex: 1; min-width: 0; font: italic 10px/14px "Liberation Mono", "Noto Sans CJK SC", monospace; }
input:focus { outline: none; }
.cmd input::placeholder { color: #888; }
.account { display: flex; align-items: center; justify-content: flex-end; }
.signin { font-size: 12px; color: #222; margin-right: 7px; }
.avatar { display: grid; place-items: center; width: 22px; height: 22px; border-radius: 50%; background: #cbcbcb; }
.win { width: 41px; height: 24px; display: grid; place-items: center; }
.win.bell { width: 42px; }
.win.help { width: 32px; font-size: 14px; color: #666; }

.tabs { display: flex; align-items: center; gap: 30px; height: 24px; padding-left: 16px; font-size: 12px; }
.tabs button { position: relative; height: 22px; line-height: 20px; color: #1c1c1c; white-space: nowrap; }
.tabs .on { margin-left: 3px; }
.tabs .on::after { content: ""; position: absolute; left: 0; right: 0; bottom: 0; height: 2px; background: #1f78b4; }
.context { display: flex; gap: 30px; padding: 0 13px; margin-left: 3px; background: #fff; border: 1px solid #e6e6e6; border-radius: 3px; }

.ribbon { display: flex; height: 90px; padding: 3px 0 4px; border-bottom: 1px solid #c6c6c6; flex: none; }
.group { display: grid; grid-template: 68px 15px / 1fr; border-right: 1px solid #c4c4c4; position: relative; }
.tools { display: flex; }
.cap { text-align: center; font-size: 10px; line-height: 18px; color: #555; }
.launch { position: absolute; right: 2px; bottom: 0; }
.big { display: flex; flex-direction: column; align-items: center; height: 68px; padding-top: 2px; white-space: nowrap; color: #222; }
.big > span { line-height: 15px; }
.big > .xy { font: 10px/9px "Liberation Mono", monospace; }
.big.active { background: #9bdcfe; }
.off, .big.off, .small.off { color: #8c8c8c; }
.off .chev { color: #aaa; }
.w34 { width: 34px; } .w36 { width: 36px; } .w40 { width: 40px; } .w50 { width: 50px; } .w62 { width: 62px; } .w74 { width: 74px; }
.rows { display: flex; flex-direction: column; }
.small { display: flex; align-items: center; gap: 3px; height: 22px; white-space: nowrap; }
.rows.icons { width: 22px; }
.rows.icons .ib { height: 22px; }
.g-clip { width: 121px; }
.g-clip .tools { padding-left: 5px; }
.g-nav { width: 163px; }
.g-nav .tools { padding-left: 6px; }
.g-nav .cap, .g-select .cap { padding-right: 14px; }
.pairs { display: grid; grid-template: repeat(3, 22px) / 21px 21px; }
.g-layer { width: 70px; }
.layergrid { display: grid; grid-template: 22px 22px / 34px 16px; padding-left: 8px; }
.ib.two { justify-content: flex-start; gap: 3px; }
.g-select { width: 194px; }
.g-select .tools { padding-left: 5px; }
.g-query { width: 210px; }
.g-query .tools { padding-left: 6px; }
.g-label { width: 146px; }
.g-label .tools { padding-left: 8px; }
.labelgrid { display: grid; grid-template: repeat(3, 22px) / 48px 46px; color: #222; }
.g-label .cap, .g-offline .cap { padding-right: 16px; }
.g-offline { width: 86px; }
.g-offline .tools { padding-left: 7px; }
.fold { margin: auto 5px 0 auto; }

.work { flex: 1; min-height: 0; display: grid; grid-template-columns: 240px minmax(0, 1fr) 252px; gap: 7px; padding: 7px 6px 6px 6px; background: #e9e9e9; }
.panel { background: #f7f7f7; border: 1px solid #ddd; display: flex; flex-direction: column; min-height: 0; }
h2, h3 { font-size: 14px; font-weight: 400; line-height: 20px; color: #333; }
.ptitle { display: flex; align-items: center; gap: 8px; height: 26px; padding: 0 5px 0 6px; }
.ptitle h2 { flex: 1; font-size: 15px; color: #222; }
.searchrow { display: flex; align-items: center; gap: 6px; padding: 2px 2px 0 3px; }
.search { flex: 1; display: flex; align-items: center; gap: 8px; height: 23px; padding: 0 4px; border: 1px solid #aaa; background: #fff; }
.search input { flex: 1; min-width: 0; font-style: italic; }
.search input::placeholder { color: #444; }
.modes { display: flex; height: 39px; margin-left: 14px; }
.modes button { width: 30px; border-bottom: 1px solid #ccc; display: grid; place-items: center; }
.modes .on { border-bottom: 3px solid #1f78b4; }
.modes .more { border-bottom: 0; margin-left: 6px; }
.contents h3 { padding: 0 13px; margin-top: 8px; font-weight: 500; }
.node { display: flex; align-items: center; gap: 4px; height: 22px; padding-left: 2px; }
.contents h3 + .node { height: 27px; }
.child { padding-left: 12px; gap: 2px; }
.sel { flex: 1; display: flex; align-items: center; gap: 4px; height: 22px; padding-left: 2px; background: #c5dcee; border: 1px solid #3b8ac4; }
input[type=checkbox] { appearance: none; width: 13px; height: 13px; border: 1px solid #888; background: #fff; border-radius: 2px; display: grid; place-items: center; flex: none; }
input[type=checkbox]::after { content: ""; width: 8px; height: 4px; border: solid #555; border-width: 0 0 2px 2px; transform: translateY(-1px) rotate(-48deg); }
.swatch { width: 20px; height: 15px; margin: 4px 0 0 26px; background: #fde2c2; border: 1px solid #888; }

.mapview { display: flex; flex-direction: column; min-height: 0; }
.doctabs { display: flex; justify-content: space-between; align-items: center; height: 21px; border-bottom: 1px solid #d5d5d5; padding-right: 3px; flex: none; }
.doctab { display: flex; align-items: center; gap: 5px; height: 21px; width: 72px; padding-left: 5px; background: #d4d4d4; white-space: nowrap; }
.doctab .ib { margin-left: 3px; }
.canvas { flex: 1; min-height: 0; background: #fff; }
.canvas svg { width: 100%; height: 100%; }
.status { display: flex; align-items: center; gap: 7px; height: 20px; margin-bottom: 2px; padding: 0 4px 0 5px; background: #f8f8f8; flex: none; }
.bar { width: 1px; height: 14px; background: #aaa; }
.push { margin-left: auto; }
.scale + .bar { margin-right: -3px; }
.sicons { display: flex; gap: 5px; }
.coords { font: 10px/14px "Liberation Mono", "Noto Sans CJK SC", monospace; margin-left: 20px; white-space: nowrap; }
.count { display: flex; align-items: center; gap: 2px; color: #aaa; }

.combo { display: grid; grid-template-columns: 1fr; align-items: center; }
.combo > * { grid-area: 1 / 1; }
.combo svg { justify-self: end; margin-right: 4px; pointer-events: none; color: #888; }
.combo select { appearance: none; width: 100%; height: 21px; padding: 0 4px; border: 1px solid #999; background: #fff; color: #222; }
.scale { width: 94px; }
.scale .bar { margin: 0; }
.scale select { height: 20px; font: 10px/14px "Liberation Mono", monospace; }
.right { display: flex; flex-direction: column; min-height: 0; }
.gp { flex: 1; }
.toolname { display: flex; align-items: center; justify-content: space-between; height: 25px; padding: 0 4px 0 6px; }
.toolname h2 { color: #555; }
.gptabs { display: flex; align-items: flex-end; gap: 12px; height: 28px; padding: 0 5px 0 9px; }
.gptabs button { height: 20px; border-bottom: 2px solid transparent; font-size: 12px; }
.gptabs .on { border-color: #2786c2; font-weight: 500; }
.qhelp { margin: 0 0 1px auto; }
.form { display: flex; flex-direction: column; gap: 3px; padding: 10px 7px 0 17px; color: #555; }
.field { display: flex; flex-direction: column; border: 0; }
.line { display: flex; align-items: center; gap: 7px; }
.grow { flex: 1; min-width: 0; }
.form input:not([type=checkbox]) { height: 21px; padding: 0 4px; border: 1px solid #999; background: #fff; color: #333; min-width: 0; }
.form .latin { font: 10px/14px "Liberation Mono", "Noto Sans CJK SC", monospace; }
.line > .ib:last-child { margin-right: 2px; }
.line > .pen.ib { gap: 2px; margin: 0 3px; }
.dist { gap: 2px; }
.form .dist input { margin-left: 19px; padding: 0 3px; text-align: right; color: #555; }
.dist legend { height: 14px; }
.dist .last { gap: 14px; }
.form .dist .last input { margin-left: 0; flex: 1; }
.grip { width: 5px; height: 20px; background: #e0e0e0; }
.addmore { display: flex; align-items: center; gap: 4px; height: 24px; align-self: flex-end; padding-right: 7px; }
.check { display: flex; align-items: center; gap: 6px; height: 15px; }
.run { display: flex; align-items: center; gap: 6px; height: 24px; width: 83px; padding: 0 2px 0 10px; margin: auto 5px 4px auto; border: 1px solid #777; border-radius: 2px; background: #fdfdfd; }
.run .chev { margin-left: auto; }
.docktabs { display: flex; height: 17px; }
.docktabs button { padding: 0 5px; }
.docktabs button + button { margin-left: 2px; }
.docktabs .on { background: #fafafa; color: #1f82c2; }
```
